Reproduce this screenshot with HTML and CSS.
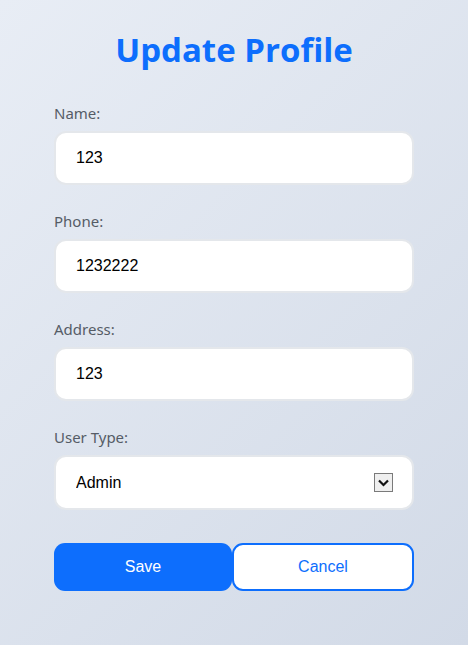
FILE: index.html
```html
<!DOCTYPE html>
<html>
<head>
<meta charset="utf-8">
<link rel="stylesheet" href="styles.css">
</head>
<body>
<div class="page">
  <h1 class="title">Update Profile</h1>
  <form class="form">
    <div class="group">
      <label class="label">Name:</label>
      <input class="field" type="text" value="123">
    </div>
    <div class="group">
      <label class="label">Phone:</label>
      <input class="field" type="text" value="1232222">
    </div>
    <div class="group">
      <label class="label">Address:</label>
      <input class="field" type="text" value="123">
    </div>
    <div class="group">
      <label class="label">User Type:</label>
      <div class="select-wrap">
        <select class="field select"><option>Admin</option></select>
        <span class="arrow"><svg width="19" height="19" viewBox="0 0 19 19"><rect x="0.5" y="0.5" width="18" height="18" fill="#efefef" stroke="#7a7a7a"/><path d="M5 7.5 L9.5 12 L14 7.5" fill="none" stroke="#111" stroke-width="2.2"/></svg></span>
      </div>
    </div>
    <div class="buttons">
      <button type="button" class="btn btn-save">Save</button>
      <button type="button" class="btn btn-cancel">Cancel</button>
    </div>
  </form>
</div>
</body>
</html>
```
FILE: styles.css
```css
html, body {
  margin: 0;
  height: 100%;
}
body {
  background: linear-gradient(135deg, #e8edf5 0%, #d2dae7 100%);
  font-family: "Noto Sans", "Open Sans", sans-serif;
}
.page {
  width: 360px;
  margin: 0 auto;
  padding-top: 28px;
}
.title {
  margin: 0 0 31px;
  text-align: center;
  font-family: "Open Sans", sans-serif;
  font-weight: 700;
  font-size: 33px;
  line-height: 44px;
  color: #0d6efd;
}
.group {
  margin-bottom: 26px;
}
.group:last-of-type {
  margin-bottom: 0;
}
.label {
  display: block;
  font-size: 15px;
  line-height: 20px;
  color: #555c66;
  margin-bottom: 8px;
}
.field {
  box-sizing: border-box;
  display: block;
  width: 360px;
  height: 54px;
  border: 2px solid #e4e7eb;
  border-radius: 12px;
  background: #fff;
  padding: 0 20px;
  font-family: "Liberation Sans", Arial, sans-serif;
  font-size: 16px;
  color: #000;
  outline: none;
}
.select-wrap {
  position: relative;
}
.select {
  appearance: none;
  -webkit-appearance: none;
  height: 55px;
}
.arrow {
  position: absolute;
  right: 21px;
  top: 18px;
  width: 19px;
  height: 19px;
  pointer-events: none;
}
.arrow svg { display: block; }
.buttons {
  display: flex;
  margin-top: 33px;
}
.btn {
  flex: 1;
  height: 48px;
  border-radius: 11px;
  font-family: "Liberation Sans", Arial, sans-serif;
  font-size: 16px;
  box-sizing: border-box;
  cursor: pointer;
}
.btn-save {
  background: #0d6efd;
  border: none;
  color: #fff;
}
.btn-cancel {
  background: #fff;
  border: 2px solid #0d6efd;
  color: #0d6efd;
}
```
